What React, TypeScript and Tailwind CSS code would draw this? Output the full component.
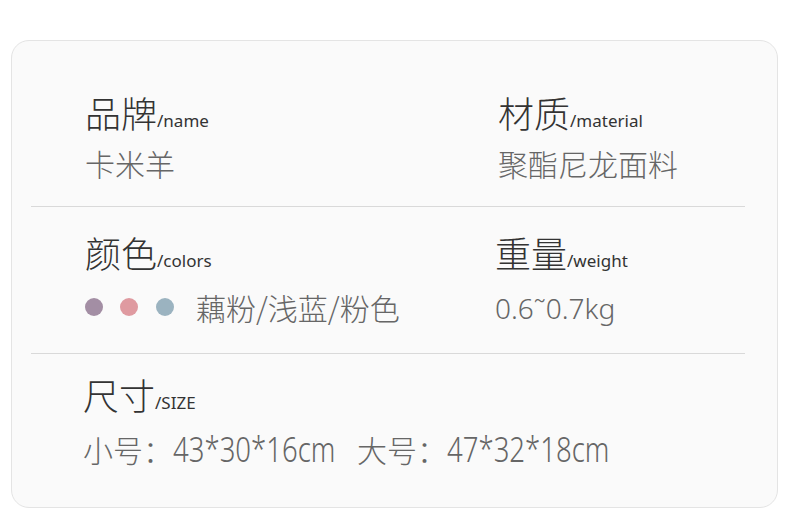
import React from "react";

const cjk = { fontFamily: '"Noto Sans CJK SC", "Noto Sans", sans-serif' };
const latin = { fontFamily: '"Noto Sans", "Noto Sans CJK SC", sans-serif' };

function Title({ zh, en }: { zh: string; en: string }) {
  return (
    <div className="flex items-end leading-none text-[#333]">
      <span className="text-[36px] leading-none font-light" style={cjk}>{zh}</span>
      <span className="text-[17px] leading-none mb-[1px]" style={latin}>{en}</span>
    </div>
  );
}

function Dims({ text }: { text: string }) {
  return (
    <span className="inline-block w-[161px] overflow-visible whitespace-nowrap align-baseline">
      <span className="inline-block origin-left scale-x-[0.81] text-[34px] leading-none font-light" style={latin}>{text}</span>
    </span>
  );
}

export default function App() {
  return (
    <div className="w-[790px] h-[522px] bg-white pt-[40px] pl-[11px]">
      <div className="w-[767px] h-[468px] rounded-[18px] border border-[#e4e4e4] bg-[#fafafa] pl-[19px] pr-[32px] flex flex-col">
        <div className="h-[166px] border-b border-[#d9d9d9] flex pt-[53px]">
          <div className="w-[467px] pl-[54px]">
            <Title zh="品牌" en="/name" />
            <div className="mt-[18px] text-[30px] leading-none text-[#666] font-light" style={cjk}>卡米羊</div>
          </div>
          <div>
            <Title zh="材质" en="/material" />
            <div className="mt-[18px] text-[30px] leading-none text-[#666] font-light" style={cjk}>聚酯尼龙面料</div>
          </div>
        </div>
        <div className="h-[147px] border-b border-[#d9d9d9] flex pt-[27px]">
          <div className="w-[464px] pl-[54px]">
            <Title zh="颜色" en="/colors" />
            <div className="mt-[22px] flex items-center">
              <span className="w-[18px] h-[18px] rounded-full bg-[#a38ea4]" />
              <span className="ml-[17px] w-[18px] h-[18px] rounded-full bg-[#df9aa0]" />
              <span className="ml-[18px] w-[18px] h-[18px] rounded-full bg-[#9bb3c0]" />
              <span className="ml-[22px] text-[30px] leading-none text-[#666] font-light" style={cjk}>藕粉/浅蓝/粉色</span>
            </div>
          </div>
          <div>
            <Title zh="重量" en="/weight" />
            <div className="mt-[24px] text-[28px] leading-none text-[#666] font-light" style={latin}>0.6˜0.7kg</div>
          </div>
        </div>
        <div className="flex-1 pt-[22px] pl-[52px]">
          <Title zh="尺寸" en="/SIZE" />
          <div className="mt-[20px] text-[30px] leading-none text-[#666] whitespace-pre flex items-baseline" style={cjk}>
            <span className="font-light">小号：</span>
            <Dims text="43*30*16cm" />
            <span className="w-[23px]" />
            <span className="font-light">大号：</span>
            <Dims text="47*32*18cm" />
          </div>
        </div>
      </div>
    </div>
  );
}
